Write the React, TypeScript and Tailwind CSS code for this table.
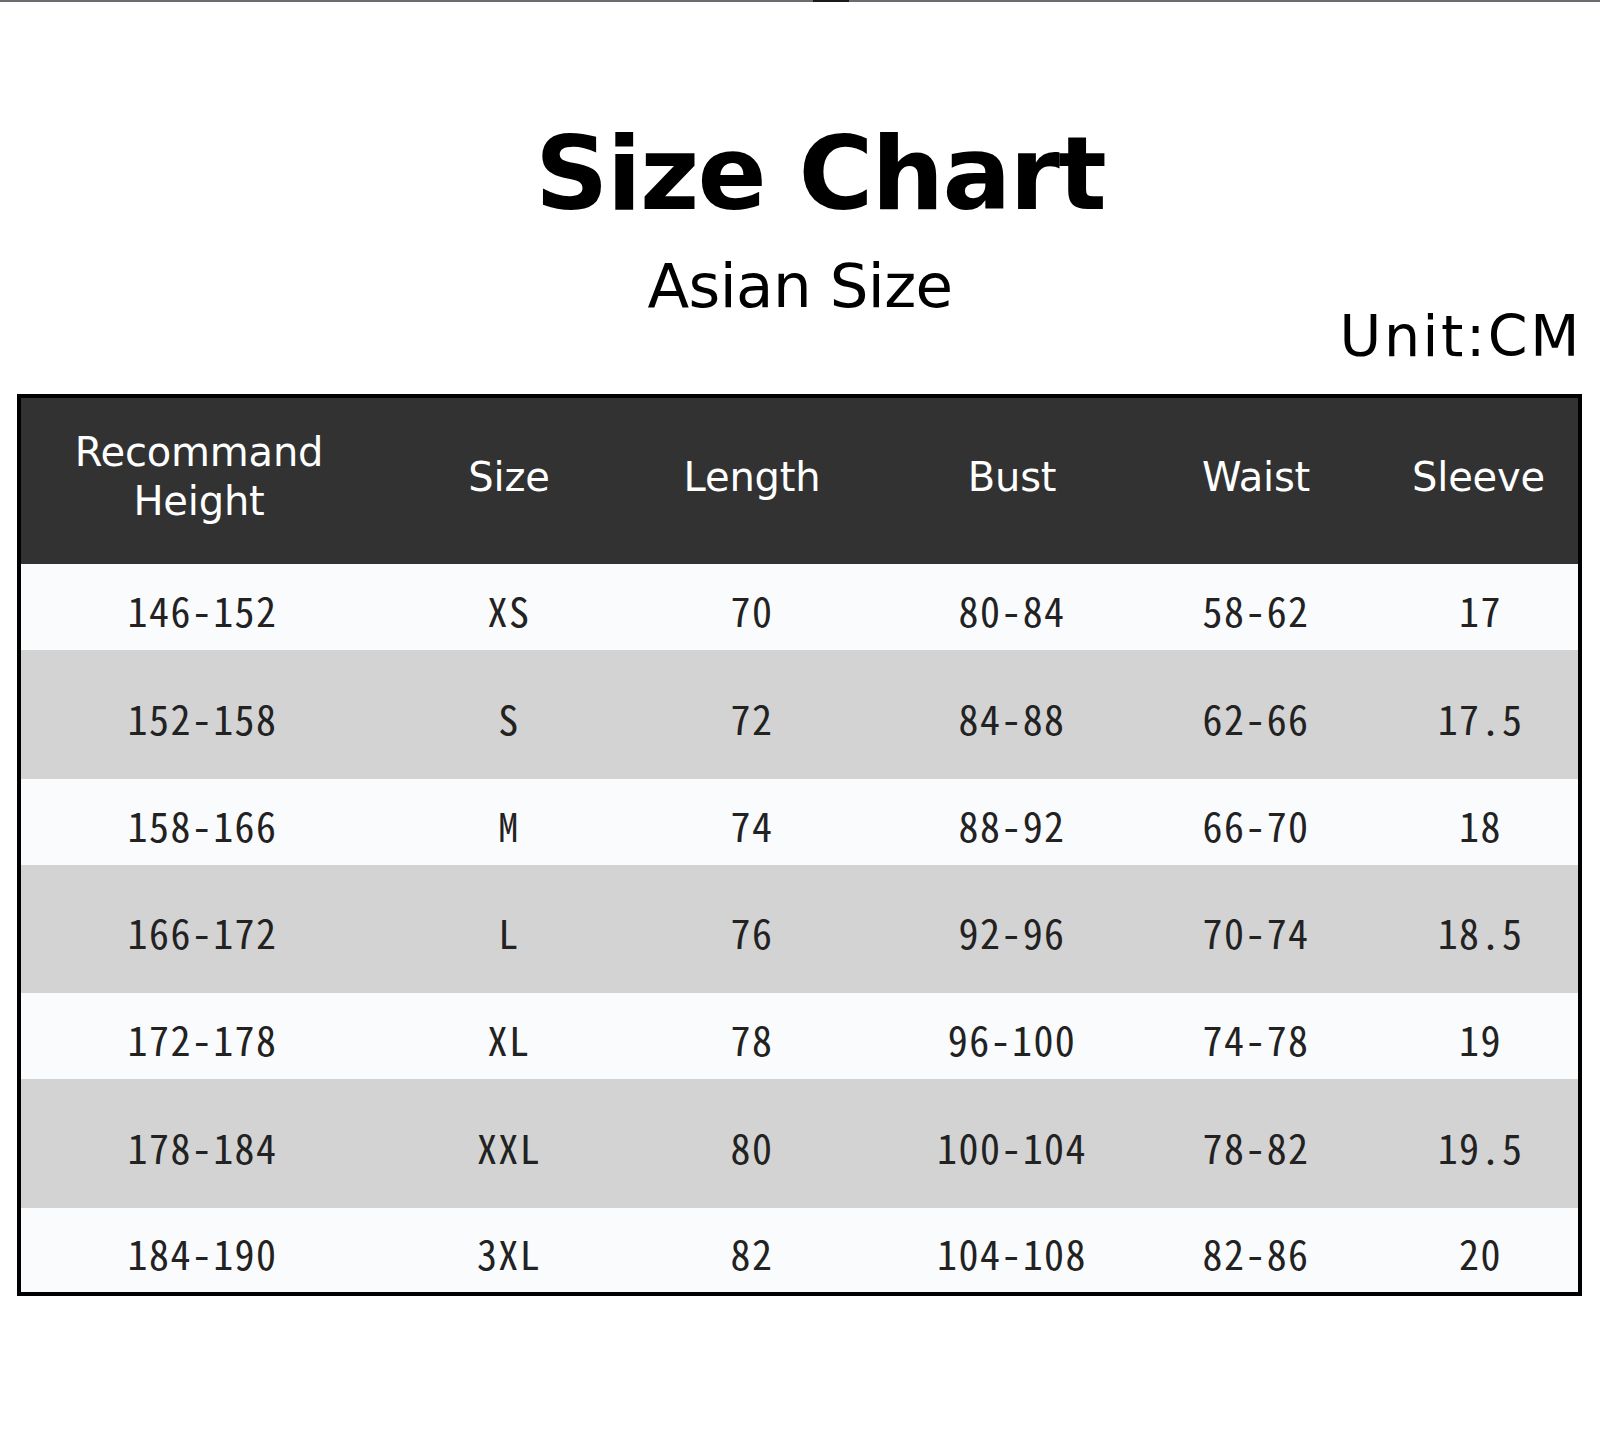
import React from "react";

const rows = [
  ["146-152", "XS", "70", "80-84", "58-62", "17"],
  ["152-158", "S", "72", "84-88", "62-66", "17.5"],
  ["158-166", "M", "74", "88-92", "66-70", "18"],
  ["166-172", "L", "76", "92-96", "70-74", "18.5"],
  ["172-178", "XL", "78", "96-100", "74-78", "19"],
  ["178-184", "XXL", "80", "100-104", "78-82", "19.5"],
  ["184-190", "3XL", "82", "104-108", "82-86", "20"],
];

const rowStyles = [
  "h-[86px] bg-[#fafbfd]",
  "h-[129px] bg-[#d3d3d3]",
  "h-[86px] bg-[#fafbfd]",
  "h-[128px] bg-[#d3d3d3]",
  "h-[86px] bg-[#fafbfd]",
  "h-[129px] bg-[#d3d3d3]",
  "h-[84px] bg-[#fafbfd]",
];

const grid = "grid grid-cols-[358px_260px_226px_294px_194px_225px]";
const sans = "font-['DejaVu_Sans',Verdana,sans-serif]";
const dataFont =
  "font-['Noto_Sans_CJK_JP','DejaVu_Sans_Mono',monospace] [font-feature-settings:'hwid']";

const cellPad = ["pl-[5px]", "", "", "", "", "pl-[30px]"];

export default function App() {
  return (
    <div className="w-[1600px] min-h-[1439px] bg-white">
      <div className="flex h-[2px]">
        <div className="w-[813px] bg-[#6e6a72]" />
        <div className="w-[36px] bg-[#1a1a1a]" />
        <div className="flex-1 bg-[#6e6a72]" />
      </div>

      <div className={`${sans} text-black`}>
        <div className="mt-[121px] flex justify-center pl-[40px]">
          <h1 className="text-[102px] font-bold leading-[102px] tracking-[-1.8px]">Size Chart</h1>
        </div>
        <div className="mt-[30px] flex justify-center">
          <div className="text-[61px] leading-[61px] tracking-[-0.6px]">Asian Size</div>
        </div>
        <div className="-mt-[8px] flex justify-end pr-[18px]">
          <div className="text-[57px] leading-[57px] tracking-[2.6px]">Unit:CM</div>
        </div>
      </div>

      <div className="ml-[17px] mt-[29px] w-[1565px] border-4 border-black">
        <div className={`${grid} ${sans} h-[166px] bg-[#323232] text-[40px] leading-[49px] tracking-[-0.2px] text-white`}>
          <div className="flex items-center justify-center pb-[8px] pr-[2px] text-center">
            <span>
              Recommand
              <br />
              Height
            </span>
          </div>
          <div className="flex items-center justify-center pb-[8px]">Size</div>
          <div className="flex items-center justify-center pb-[8px]">Length</div>
          <div className="flex items-center justify-center pb-[8px]">Bust</div>
          <div className="flex items-center justify-center pb-[8px]">Waist</div>
          <div className="flex items-center justify-center pb-[8px] pl-[26px]">Sleeve</div>
        </div>
        {rows.map((r, i) => (
          <div key={i} className={`${grid} ${rowStyles[i]} ${dataFont} text-[40px] leading-none tracking-[1.4px] text-[#222]`}>
            {r.map((c, j) => (
              <div key={j} className={`flex items-center justify-center pt-[6px] ${cellPad[j]}`}>
                {c}
              </div>
            ))}
          </div>
        ))}
      </div>
    </div>
  );
}
